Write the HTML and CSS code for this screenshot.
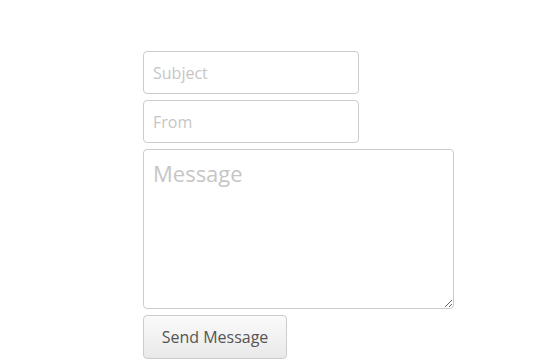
FILE: index.html
```html
<!DOCTYPE html>
<html>
<head>
<meta charset="utf-8">
<link rel="stylesheet" href="styles.css">
</head>
<body>
<form class="contact">
  <input class="field" type="text" placeholder="Subject">
  <input class="field" type="text" placeholder="From">
  <textarea class="message" placeholder="Message"></textarea>
  <button class="send" type="button">Send Message</button>
</form>
</body>
</html>
```
FILE: styles.css
```css
html, body {
  margin: 0;
  padding: 0;
  background: #fff;
}
.contact {
  display: flex;
  flex-direction: column;
  align-items: flex-start;
  gap: 6px;
  padding: 51px 0 0 143px;
  font-family: "Open Sans", sans-serif;
}
.field, .message {
  box-sizing: border-box;
  border: 1px solid #cccccc;
  border-radius: 4px;
  font-family: "Open Sans", sans-serif;
  color: #555;
  background: #fff;
  margin: 0;
  outline: none;
}
.field {
  width: 216px;
  height: 43px;
  padding: 0 9px;
  font-size: 16px;
}
.message {
  width: 311px;
  height: 160px;
  padding: 8px 9px;
  font-size: 22px;
  resize: both;
}
.field::placeholder, .message::placeholder {
  color: #c6c6c6;
}
.send {
  box-sizing: border-box;
  width: 144px;
  height: 44px;
  margin: 0;
  border: 1px solid #cccccc;
  border-radius: 4px;
  background: linear-gradient(#fafafa, #e9e9e9);
  color: #555;
  font-family: "Open Sans", sans-serif;
  font-size: 16px;
  padding: 0;
}
```
